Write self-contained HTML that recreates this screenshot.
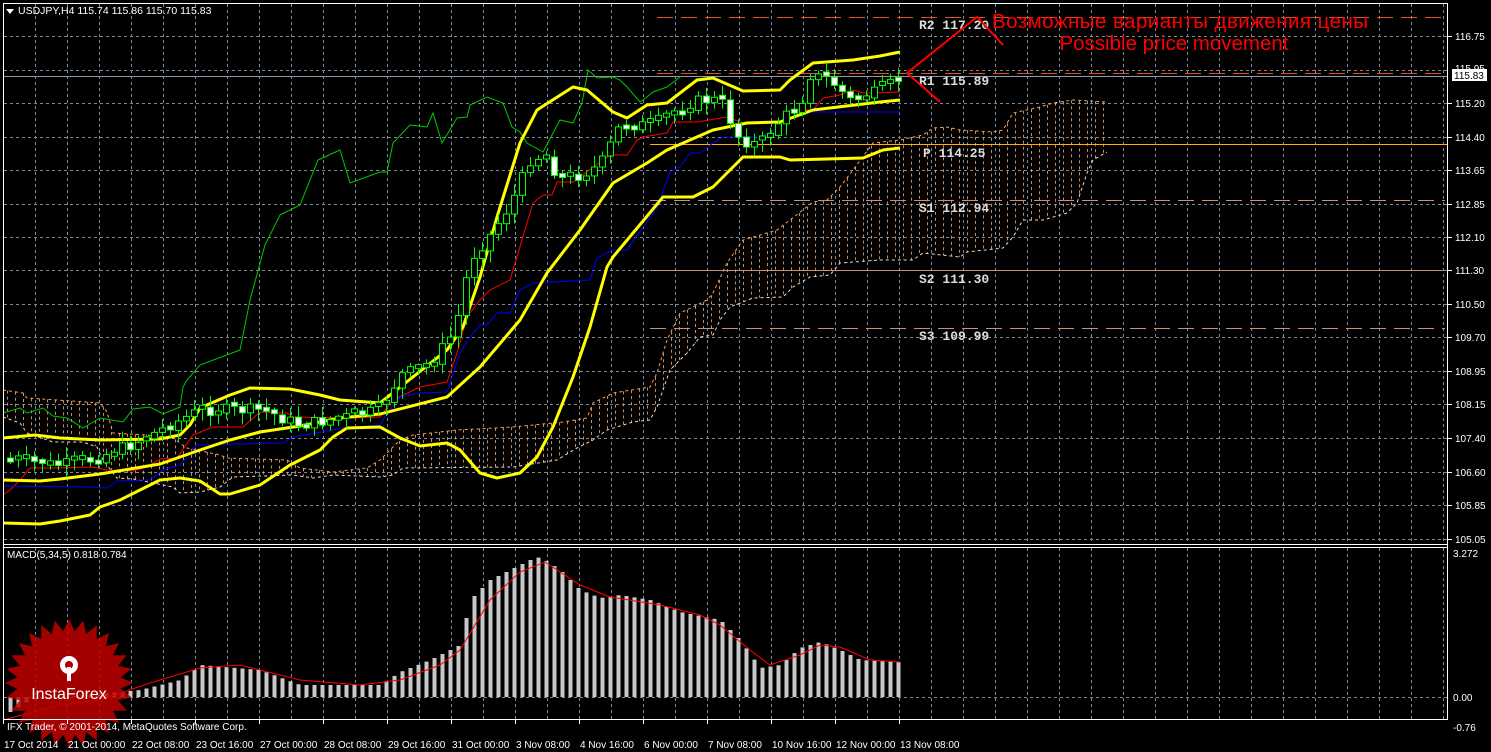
<!DOCTYPE html>
<html><head><meta charset="utf-8"><style>
html,body{margin:0;padding:0;background:#000;width:1491px;height:752px;overflow:hidden}
svg{display:block}
text{font-family:"Liberation Sans",sans-serif}
text.mono{font-family:"Liberation Mono",monospace;font-weight:bold}
</style></head><body>
<svg id="s" width="1491" height="752" xmlns="http://www.w3.org/2000/svg">
<rect width="1491" height="752" fill="#000"/>
<g id="grid"></g>
<g id="cloud"></g>
<g id="lv"></g>
<g id="lines"></g>
<g id="candles"></g>
<g id="macd"></g>
<g id="logo">
 <polygon id="star" fill="#c00000" fill-opacity="0.85"/>
 <g fill="#fff" transform="translate(69,668)">
  <circle cx="0" cy="-3" r="9"/>
  <circle cx="0" cy="-3" r="4" fill="#b00000"/>
  <rect x="-2" y="-1" width="4" height="14"/>
 </g>
 <text x="69" y="699" fill="#fff" font-size="16" text-anchor="middle">InstaForex</text>
</g>
<g id="axis"></g>
<g stroke="#fff" fill="none" stroke-width="1">
 <line x1="3.5" y1="3" x2="3.5" y2="720"/>
 <line x1="3" y1="3.5" x2="1448" y2="3.5"/>
 <line x1="1447.5" y1="3" x2="1447.5" y2="720"/>
 <line x1="3" y1="544.5" x2="1448" y2="544.5"/>
 <line x1="3" y1="547.5" x2="1448" y2="547.5"/>
 <line x1="3" y1="719.5" x2="1448" y2="719.5"/>
</g>
<polygon points="6,9 14,9 10,14" fill="#fff"/>
<text x="18" y="14" fill="#fff" font-size="10.5">USDJPY,H4  115.74 115.86 115.70 115.83</text>
<text x="7" y="558" fill="#fff" font-size="10">MACD(5,34,5) 0.818 0.784</text>
<text x="7" y="730" fill="#fff" font-size="10">IFX Trader, © 2001-2014, MetaQuotes Software Corp.</text>
<g font-size="13" fill="#ddd">
 <text class="mono" x="919" y="29">R2 117.20</text>
 <text class="mono" x="919" y="85">R1 115.89</text>
 <text class="mono" x="923" y="157">P 114.25</text>
 <text class="mono" x="919" y="212">S1 112.94</text>
 <text class="mono" x="919" y="283">S2 111.30</text>
 <text class="mono" x="919" y="340">S3 109.99</text>
</g>
<g stroke="#ff0000" stroke-width="2" fill="none">
 <polyline points="1003,45 977,17 907,73 940,102"/>
</g>
<text x="992" y="28" fill="#ff0000" font-size="20.5" textLength="376">Возможные варианты движения цены</text>
<text x="1174" y="50" fill="#ff0000" font-size="20.5" text-anchor="middle">Possible price movement</text>
</svg>
<script>
var NS='http://www.w3.org/2000/svg';
function el(p,t,a){var e=document.createElementNS(NS,t);for(var k in a)e.setAttribute(k,a[k]);p.appendChild(e);return e;}
function pl(p,pts,c,w,extra){var a={points:pts.map(function(q){return q.join(',')}).join(' '),fill:'none',stroke:c,'stroke-width':w};for(var k in extra)a[k]=extra[k];return el(p,'polyline',a);}
function interp(pts,x){if(x<=pts[0][0])return pts[0][1];for(var i=1;i<pts.length;i++){if(x<=pts[i][0]){var a=pts[i-1],b=pts[i];return a[1]+(b[1]-a[1])*(x-a[0])/(b[0]-a[0]);}}return pts[pts.length-1][1];}
var g=document.getElementById('grid');
var hy=[36,70,103,137,170,204,237,270,304,337,371,404,438,472,505,539];
hy.forEach(function(y){el(g,'line',{x1:4,y1:y+.5,x2:1447,y2:y+.5,stroke:'#7f8a99','stroke-dasharray':'3,3'});});
el(g,'line',{x1:4,y1:697.5,x2:1447,y2:697.5,stroke:'#7f8a99','stroke-dasharray':'3,3'});
for(var x=35;x<1447;x+=32){el(g,'line',{x1:x+.5,y1:4,x2:x+.5,y2:544,stroke:'#7f8a99','stroke-dasharray':'3,3'});el(g,'line',{x1:x+.5,y1:548,x2:x+.5,y2:719,stroke:'#7f8a99','stroke-dasharray':'3,3'});}
var ctop=[[3,390],[23,393],[27,398],[57,400],[100,403],[107,412],[113,433],[147,435],[173,438],[187,448],[220,455],[227,458],[287,460],[300,468],[333,472],[367,468],[380,460],[400,440],[413,435],[457,430],[513,427],[563,422],[587,418],[593,403],[613,393],[650,387],[657,373],[667,340],[680,313],[693,307],[707,300],[713,293],[727,263],[743,240],[777,230],[790,220],[813,202],[827,200],[840,187],[853,170],[873,143],[900,140],[923,135],[933,128],[947,127],[960,130],[993,132],[1003,130],[1013,113],[1040,107],[1053,103],[1073,100],[1107,102]];
var cbot=[[3,417],[20,423],[27,433],[53,442],[83,442],[97,447],[103,460],[117,478],[133,479],[173,487],[180,493],[200,492],[220,487],[233,477],[293,475],[313,478],[333,475],[380,477],[393,475],[403,468],[513,467],[557,460],[577,448],[593,440],[607,430],[633,422],[650,420],[657,407],[670,370],[687,353],[700,337],[713,335],[720,320],[730,307],[753,298],[783,297],[793,287],[810,277],[830,275],[840,263],[880,260],[913,260],[923,253],[960,257],[967,252],[1003,248],[1013,237],[1023,220],[1043,220],[1067,213],[1077,203],[1087,173],[1093,160],[1107,152]];
var cg=document.getElementById('cloud');
for(var x=7;x<=1105;x+=8){var a=interp(ctop,x),b=interp(cbot,x);el(cg,'line',{x1:x+.5,y1:a,x2:x+.5,y2:b,stroke:'#f4a460','stroke-dasharray':'3,3','stroke-opacity':.85});}
pl(cg,ctop,'#f4a460',1,{'stroke-dasharray':'3,3'});
pl(cg,cbot,'#eedccc',1,{'stroke-dasharray':'3,3'});
var lv=document.getElementById('lv');
el(lv,'line',{x1:657,y1:17.5,x2:1445,y2:17.5,stroke:'#e0502a','stroke-dasharray':'16,8'});
el(lv,'line',{x1:657,y1:73.5,x2:1445,y2:73.5,stroke:'#e0502a','stroke-dasharray':'16,8'});
el(lv,'line',{x1:650,y1:144.5,x2:1447,y2:144.5,stroke:'#ffb000'});
el(lv,'line',{x1:650,y1:200.5,x2:1445,y2:200.5,stroke:'#c8907a','stroke-dasharray':'16,8'});
el(lv,'line',{x1:650,y1:270.5,x2:1445,y2:270.5,stroke:'#c8907a'});
el(lv,'line',{x1:650,y1:328.5,x2:1445,y2:328.5,stroke:'#c8907a','stroke-dasharray':'16,8'});
el(lv,'line',{x1:4,y1:76.5,x2:1447,y2:76.5,stroke:'#8899aa'});
var L=document.getElementById('lines');
var green=[[3,413],[20,408],[27,413],[43,408],[53,416],[67,418],[83,428],[100,418],[123,422],[133,409],[150,407],[163,414],[180,407],[183,387],[187,380],[200,365],[240,350],[250,300],[265,245],[280,215],[300,205],[318,160],[340,150],[350,183],[380,172],[387,172],[393,143],[410,125],[427,127],[433,113],[442,143],[457,118],[467,117],[470,105],[487,97],[503,103],[512,127],[520,132],[527,143],[543,152],[560,120],[573,123],[582,103],[588,70],[597,78],[613,77],[620,80],[627,87],[640,102],[647,97],[653,92],[667,87],[680,77]];
pl(L,green,'#00c800',1);
var red=[[3,495],[10,490],[20,480],[30,468],[53,468],[93,467],[107,470],[133,471],[147,467],[160,459],[177,458],[193,435],[213,427],[243,427],[260,412],[287,413],[293,417],[347,418],[380,417],[393,400],[420,387],[447,382],[457,353],[467,317],[480,300],[490,290],[510,280],[533,203],[543,195],[552,195],[557,182],[573,182],[610,155],[627,155],[637,140],[643,137],[667,133],[673,122],[697,122],[727,117],[743,123],[780,123],[790,110],[813,110],[823,98],[840,95],[853,90],[863,93],[900,92]];
pl(L,red,'#ff0000',1);
var blue=[[3,486],[90,487],[107,488],[117,481],[150,480],[163,470],[180,465],[197,445],[283,443],[293,437],[317,433],[343,428],[380,425],[387,413],[400,397],[420,393],[447,392],[460,353],[470,337],[480,325],[487,325],[497,313],[510,313],[520,290],[533,283],[590,280],[597,258],[613,250],[627,250],[643,227],[657,208],[670,172],[680,167],[690,153],[700,153],[713,143],[723,137],[760,137],[780,127],[797,112],[900,112]];
pl(L,blue,'#0000ff',1);
var up=[[3,438],[35,435],[60,438],[100,440],[160,439],[180,435],[190,425],[200,408],[230,395],[250,388],[290,389],[320,395],[340,400],[380,403],[447,350],[463,327],[480,277],[497,217],[520,143],[537,110],[573,87],[587,90],[613,112],[627,118],[647,105],[667,103],[697,80],[713,78],[743,91],[780,90],[790,80],[813,63],[853,60],[880,56],[900,52]];
var mid=[[3,480],[40,481],[60,479],[100,474],[160,464],[200,450],[230,440],[260,432],[300,426],[340,418],[380,414],[447,397],[480,367],[520,320],[547,273],[580,230],[613,183],[647,163],[667,150],[713,130],[747,123],[780,122],[813,110],[880,102],[900,100]];
var lo=[[3,523],[40,524],[60,521],[90,515],[100,507],[120,500],[140,490],[160,480],[180,478],[200,481],[220,494],[230,494],[260,485],[290,465],[320,450],[333,437],[347,428],[380,427],[400,438],[420,446],[447,443],[460,450],[480,473],[497,478],[520,473],[537,457],[553,427],[573,377],[590,327],[607,267],[613,257],[633,233],[663,197],[693,197],[713,187],[743,157],[780,157],[790,160],[863,158],[883,150],[900,148]];
[up,mid,lo].forEach(function(p){pl(L,p,'#ffff00',3,{'stroke-linejoin':'round'});});
var cp=[[8,460],[60,465],[90,460],[130,445],[200,410],[260,410],[300,425],[340,418],[380,410],[400,375],[430,365],[455,330],[470,260],[490,235],[510,205],[530,160],[545,155],[560,180],[580,175],[600,165],[620,125],[650,125],[680,110],[700,100],[720,100],[740,140],[760,145],[780,120],[800,105],[810,75],[830,80],[850,100],[870,95],[885,88],[900,77]];
var C=document.getElementById('candles');var seed=7;function rnd(){seed=(seed*9301+49297)%233280;return seed/233280;}
var prev=interp(cp,4);
for(var x=10;x<=902;x+=8){var c=interp(cp,x)+(rnd()-.5)*12;var o=prev;var t=Math.min(o,c)-3-rnd()*9,b=Math.max(o,c)+3+rnd()*9;
 el(C,'line',{x1:x+.5,y1:t,x2:x+.5,y2:b,stroke:'#00ff00'});
 var h=Math.max(4,Math.abs(o-c));var bull=c<o;
 el(C,'rect',{x:x-2.5,y:Math.min(o,c)-(h>Math.abs(o-c)?2:0),width:6,height:h,fill:bull?'#000':'#fff',stroke:'#00ff00'});
 prev=c;}
var M=document.getElementById('macd');
var mt=[[10,712],[20,706],[30,700],[140,690],[180,680],[200,665],[260,670],[300,685],[380,685],[400,672],[430,660],[460,645],[470,600],[490,580],[510,570],[530,560],[540,557],[560,570],[580,590],[600,598],[620,595],[650,600],[680,612],[720,620],[740,640],[760,668],[780,665],[800,648],[820,642],[840,650],[860,660],[900,662]];
for(var x=10;x<=900;x+=8){var y=interp(mt,x);var y0=697;el(M,'rect',{x:x-1.5,y:Math.min(y,y0),width:4,height:Math.max(1,Math.abs(y-y0)),fill:'#c8c8c8'});}
pl(M,[[3,720],[60,705],[100,700],[150,683],[200,668],[240,665],[300,680],[360,685],[400,680],[440,665],[460,650],[490,600],[520,572],[545,562],[580,585],[610,597],[660,605],[700,615],[720,625],[750,650],[770,665],[800,655],[820,645],[840,647],[870,660],[900,662]],'#ff0000',1);
var pts=[];for(var i=0;i<56;i++){var r=i%2?52:64;var a=i*Math.PI/28;pts.push((69+r*Math.sin(a)).toFixed(1)+','+(683-r*Math.cos(a)).toFixed(1));}
document.getElementById('star').setAttribute('points',pts.join(' '));
var A=document.getElementById('axis');
var pl2=[['116.75',36],['115.20',103],['114.40',137],['113.65',170],['112.85',204],['112.10',237],['111.30',270],['110.50',304],['109.70',337],['108.95',371],['108.15',404],['107.40',438],['106.60',472],['105.85',505],['105.05',539]];
pl2.forEach(function(p){el(A,'line',{x1:1448,y1:p[1]+.5,x2:1452,y2:p[1]+.5,stroke:'#fff'});var t=el(A,'text',{x:1455,y:p[1]+4,fill:'#fff','font-size':'10'});t.textContent=p[0];});
var t=el(A,'text',{x:1455,y:72,fill:'#fff','font-size':'10'});t.textContent='115.95';
el(A,'rect',{x:1452,y:69,width:35,height:12,fill:'#fff'});
t=el(A,'text',{x:1454,y:79,fill:'#000','font-size':'10'});t.textContent='115.83';
[['3.272',557],['0.00',701],['-0.76',731]].forEach(function(p){var t=el(A,'text',{x:1453,y:p[1],fill:'#fff','font-size':'10'});t.textContent=p[0];});
var dl=['17 Oct 2014','21 Oct 00:00','22 Oct 08:00','23 Oct 16:00','27 Oct 00:00','28 Oct 08:00','29 Oct 16:00','31 Oct 00:00','3 Nov 08:00','4 Nov 16:00','6 Nov 00:00','7 Nov 08:00','10 Nov 16:00','12 Nov 00:00','13 Nov 08:00'];
dl.forEach(function(d,i){var x=3+64*i;el(A,'line',{x1:x+.5,y1:720,x2:x+.5,y2:724,stroke:'#fff'});var t=el(A,'text',{x:x+1,y:748,fill:'#fff','font-size':'10'});t.textContent=d;});
</script>
</body></html>
